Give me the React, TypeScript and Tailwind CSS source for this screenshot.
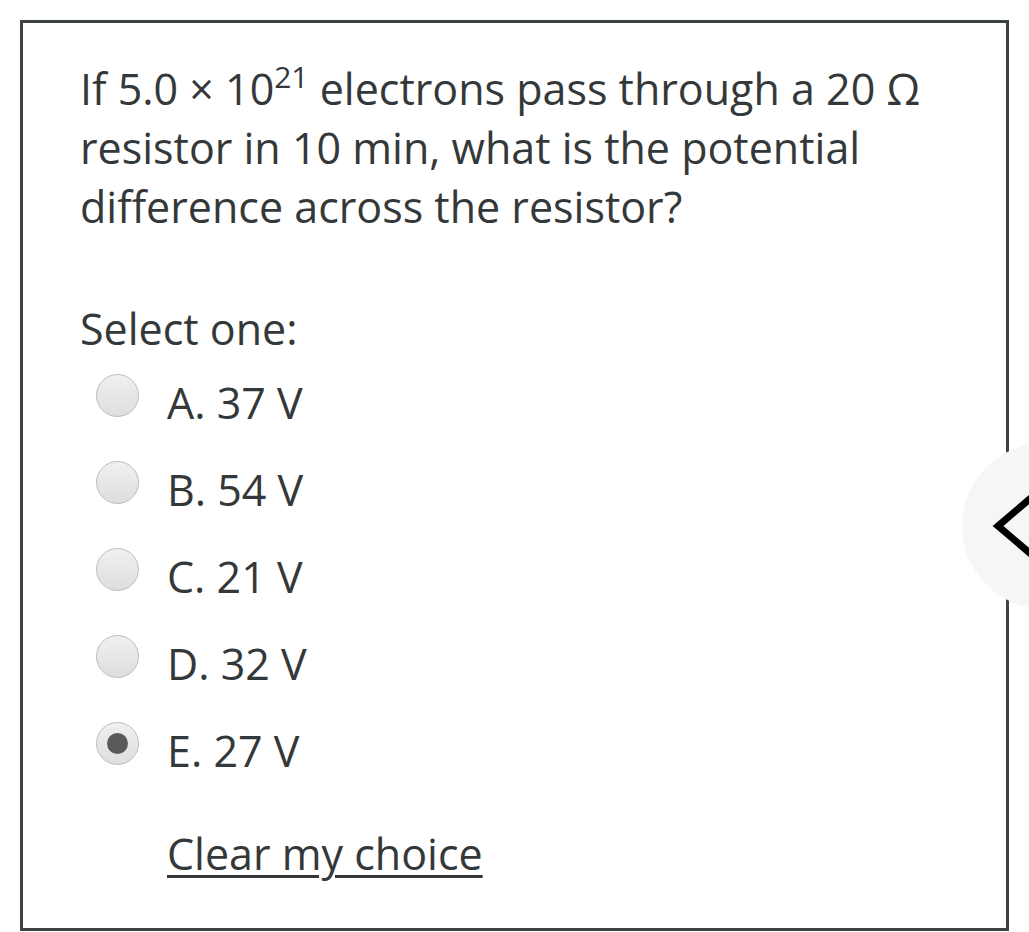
import React from "react"

const options = [
  { key: "A", label: "37 V" },
  { key: "B", label: "54 V" },
  { key: "C", label: "21 V" },
  { key: "D", label: "32 V" },
  { key: "E", label: "27 V", checked: true },
]

function Radio({ checked }: { checked?: boolean }) {
  return (
    <span className="flex h-[43px] w-[43px] shrink-0 items-center justify-center rounded-full border border-[#bdbdbd] bg-gradient-to-b from-[#f0f0f0] to-[#dedede]">
      {checked && <span className="h-[21px] w-[21px] rounded-full bg-[#5a5a5a]" />}
    </span>
  )
}

export default function App() {
  return (
    <div className="relative h-[932px] w-[1029px] overflow-hidden bg-white font-['Open_Sans',sans-serif] text-[#353839]">
      <div className="mx-[20px] mt-[20px] h-[911px] border-[3px] border-[#3d4244] pl-[57px] pr-[40px] pt-[36px]">
        <p className="text-[43px] leading-[59px]">
          If 5.0 × 10<sup className="-top-[17px] text-[30px]">21</sup> electrons pass through a 20 Ω resistor in 10 min, what is the potential difference across the resistor?
        </p>

        <p className="mt-[63px] text-[43px] leading-[59px]">Select one:</p>

        <div className="mt-[16px] flex flex-col">
          {options.map((o) => (
            <label key={o.key} className="flex h-[87px] items-start gap-[28px] pl-[16px]">
              <Radio checked={o.checked} />
              <span className="mt-[4px] text-[43px] leading-[50px]">
                {o.key}. {o.label}
              </span>
            </label>
          ))}
        </div>

        <a
          href="#"
          className="ml-[87px] mt-[15px] inline-block text-[43px] leading-[59px] text-[#353839] underline decoration-[3px] underline-offset-[5px]"
        >
          Clear my choice
        </a>
      </div>

      {/* drawer toggle */}
      <div className="absolute left-[962px] top-[443px] flex h-[166px] w-[166px] items-center rounded-full bg-[#f6f6f6]">
        <svg width="60" height="90" viewBox="0 0 60 90" className="ml-[28px]">
          <polyline points="55,5 8,45 55,85" fill="none" stroke="#000" strokeWidth="7" />
        </svg>
      </div>
    </div>
  )
}
